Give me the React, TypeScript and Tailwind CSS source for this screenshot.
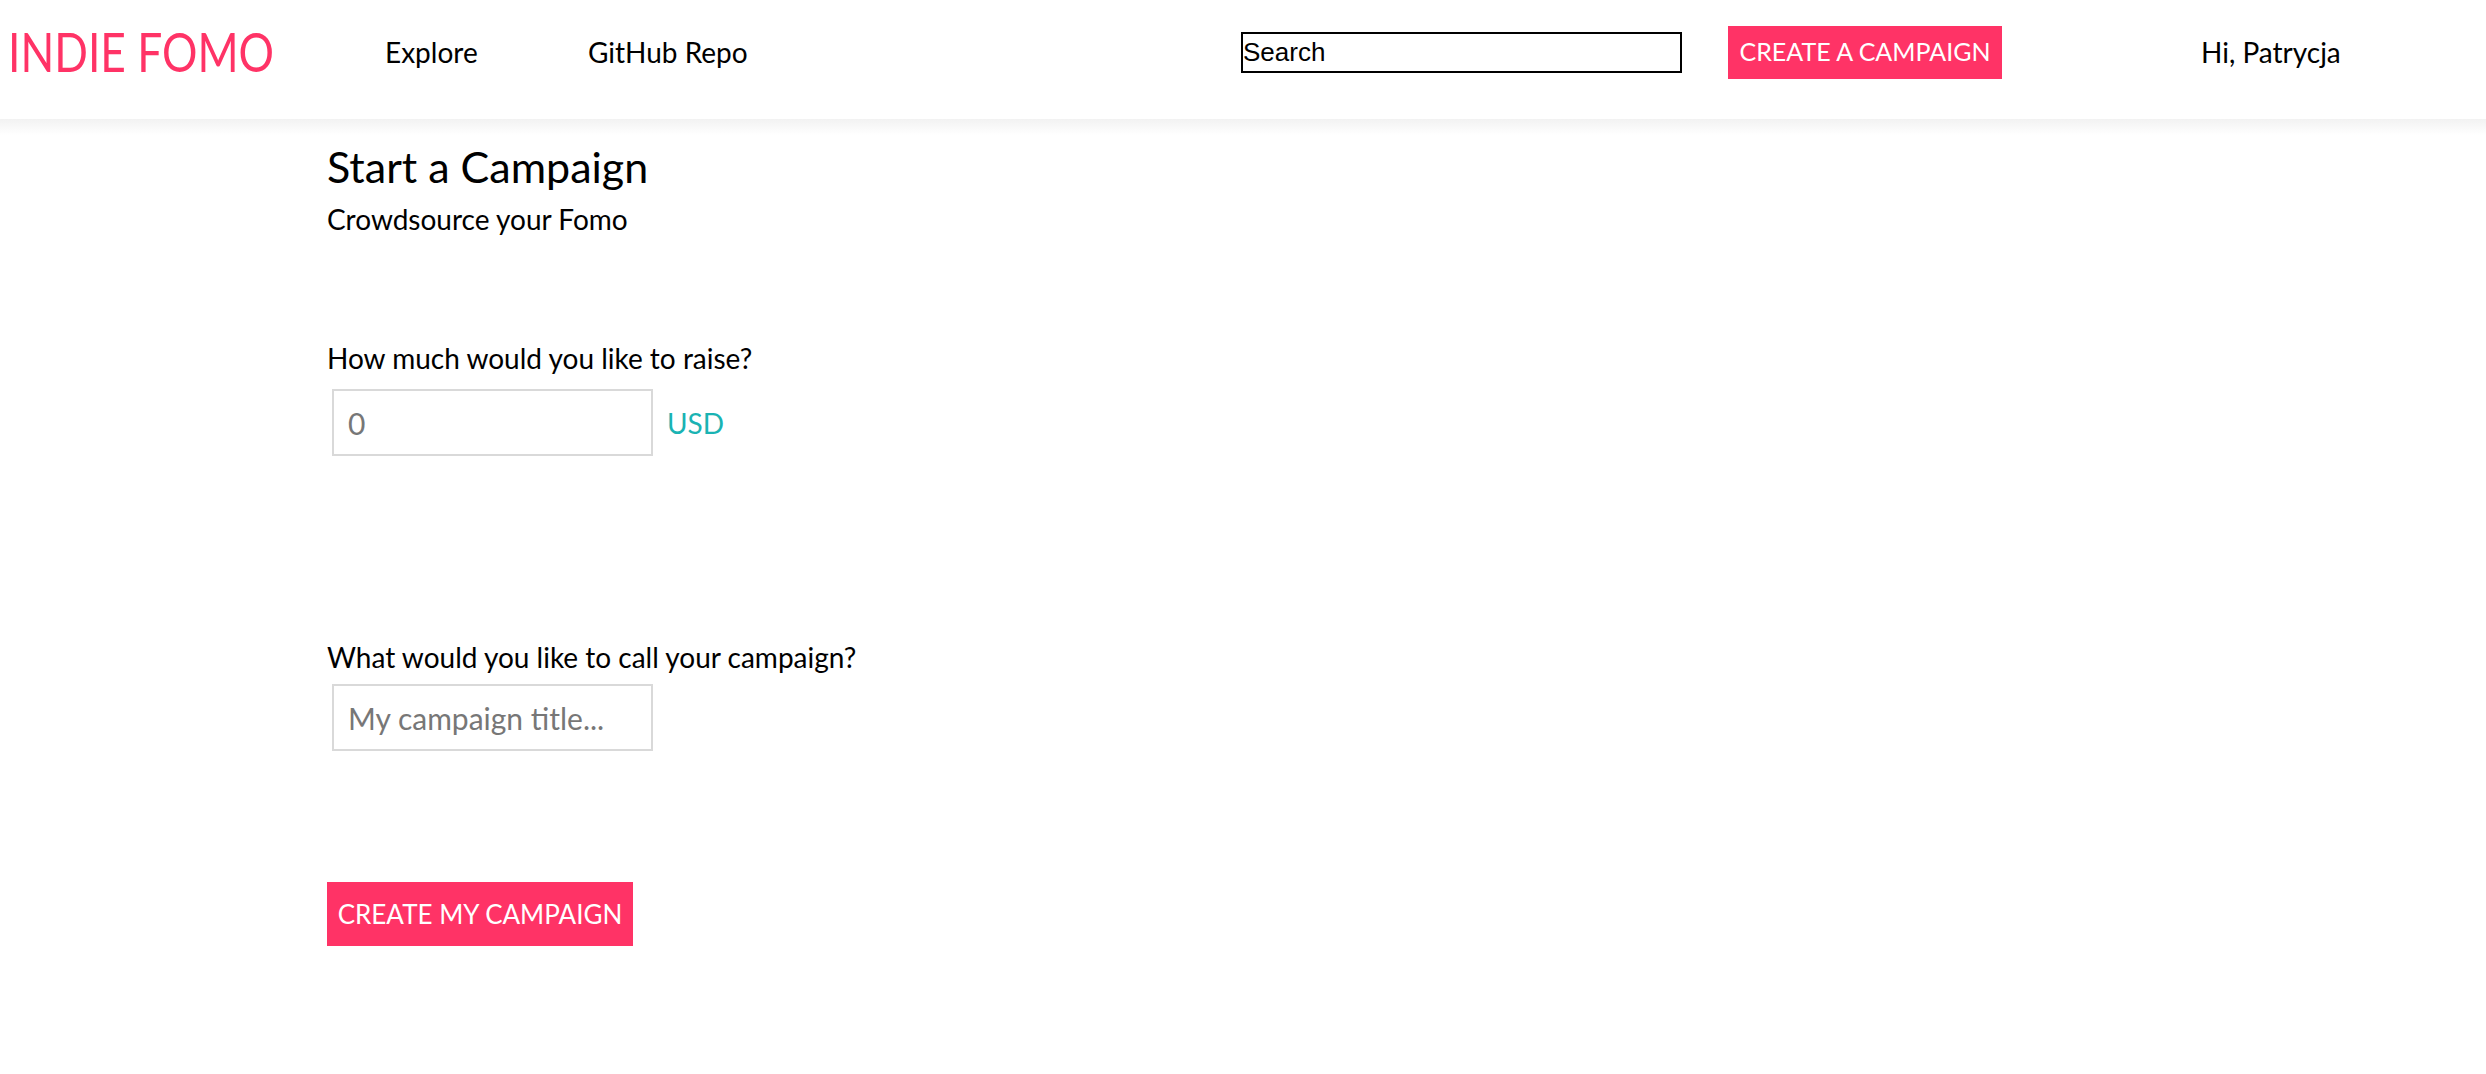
import { useState } from 'react';

const FONT = "font-['Lato','Noto_Sans',sans-serif]";

function Header() {
  return (
    <header className="relative h-[121px] border-b-2 border-[#d6d6d6] bg-white">
      <div className="flex h-[104px] items-center">
        <div className="w-[385px] pl-[8px]">
          <span className="inline-block origin-left scale-x-[0.82] whitespace-nowrap text-[54px] leading-none text-[#ff3366]">
            INDIE FOMO
          </span>
        </div>
        <a className="w-[203px] text-[28px] text-black">Explore</a>
        <a className="w-[653px] text-[28px] text-black">GitHub Repo</a>
        <input
          className="h-[41px] w-[441px] border-2 border-black px-0 font-['Liberation_Sans',sans-serif] text-[26px] text-black outline-none"
          defaultValue="Search"
        />
        <button className="ml-[46px] h-[53px] w-[274px] whitespace-nowrap bg-[#ff3366] text-[25px] text-white">
          CREATE A CAMPAIGN
        </button>
        <span className="ml-[199px] text-[28px] text-black">Hi, Patrycja</span>
      </div>
      <div className="absolute inset-x-0 top-full h-[16px] bg-gradient-to-b from-[#f2f2f2] to-white" />
    </header>
  );
}

function Field({ label, gap, children }: { label: string; gap: string; children: React.ReactNode }) {
  return (
    <div>
      <div className="text-[28px] leading-[36px] text-black">{label}</div>
      <div className={`${gap} flex items-center pl-[5px]`}>{children}</div>
    </div>
  );
}

export default function App() {
  const [goal, setGoal] = useState('');
  const [title, setTitle] = useState('');

  return (
    <div className={`${FONT} min-h-[1074px] bg-white`}>
      <Header />
      <main className="pl-[327px] pt-[16px]">
        <h2 className="text-[43px] leading-[60px] text-black">Start a Campaign</h2>
        <p className="mt-[4px] text-[28px] leading-[36px] text-black">Crowdsource your Fomo</p>

        <div className="mt-[103px]">
          <Field label="How much would you like to raise?" gap="mt-[13px]">
            <input
              className="h-[67px] w-[321px] border-2 border-[#d9d9d9] px-[14px] text-[30px] text-[#555] outline-none placeholder:text-[#777]"
              placeholder="0"
              value={goal}
              onChange={(e) => setGoal(e.target.value)}
            />
            <span className="ml-[14px] text-[28px] text-[#1ab3b3]">USD</span>
          </Field>
        </div>

        <div className="mt-[183px]">
          <Field label="What would you like to call your campaign?" gap="mt-[9px]">
            <input
              className="h-[67px] w-[321px] border-2 border-[#d9d9d9] px-[14px] text-[30px] text-[#555] outline-none placeholder:text-[#777]"
              placeholder="My campaign title..."
              value={title}
              onChange={(e) => setTitle(e.target.value)}
            />
          </Field>
        </div>

        <button className="mt-[131px] h-[64px] w-[306px] whitespace-nowrap bg-[#ff3366] text-[26px] text-white">
          CREATE MY CAMPAIGN
        </button>
      </main>
    </div>
  );
}
